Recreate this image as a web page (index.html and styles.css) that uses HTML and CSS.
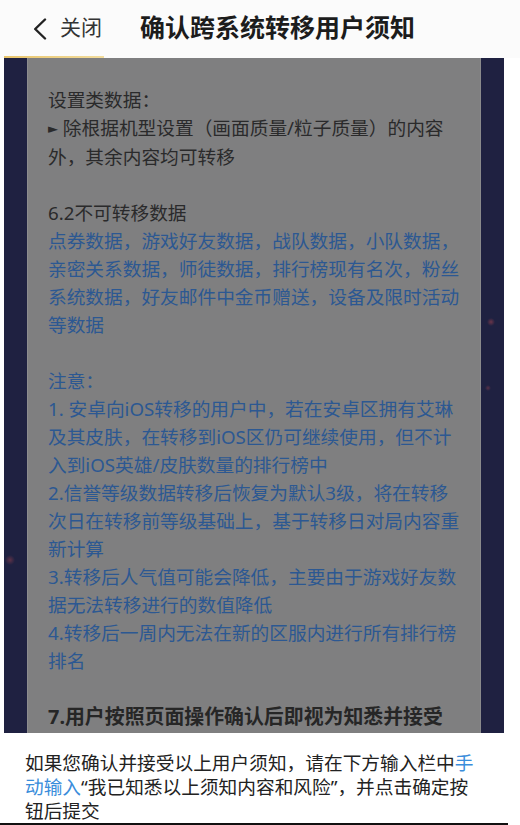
FILE: index.html
```html
<!DOCTYPE html>
<html lang="zh-CN">
<head>
<meta charset="utf-8">
<title>确认跨系统转移用户须知</title>
<link rel="stylesheet" href="styles.css">
</head>
<body>
<div class="page">
  <header class="topbar">
    <div class="back">
      <svg class="chev" width="14" height="22" viewBox="0 0 14 22"><polyline points="12,1.5 2.2,11 12,20.5" fill="none" stroke="#222" stroke-width="2.4" stroke-linecap="round" stroke-linejoin="round"/></svg>
      <span class="close">关闭</span>
    </div>
    <h1 class="title">确认跨系统转移用户须知</h1>
    <div class="progress"></div>
  </header>
  <main class="stage">
    <div class="panel">
      <p class="block dark">设置类数据：<br><span class="tri">►</span> 除根据机型设置（画面质量/粒子质量）的内容<br>外，其余内容均可转移</p>
      <p class="block"><span class="dark">6.2不可转移数据</span><br><span class="blue">点券数据，游戏好友数据，战队数据，小队数据，<br>亲密关系数据，师徒数据，排行榜现有名次，粉丝<br>系统数据，好友邮件中金币赠送，设备及限时活动<br>等数据</span></p>
      <p class="block blue">注意：<br>1. 安卓向iOS转移的用户中，若在安卓区拥有艾琳<br>及其皮肤，在转移到iOS区仍可继续使用，但不计<br>入到iOS英雄/皮肤数量的排行榜中<br>2.信誉等级数据转移后恢复为默认3级，将在转移<br>次日在转移前等级基础上，基于转移日对局内容重<br>新计算<br>3.转移后人气值可能会降低，主要由于游戏好友数<br>据无法转移进行的数值降低<br>4.转移后一周内无法在新的区服内进行所有排行榜<br>排名</p>
      <p class="block strong">7.用户按照页面操作确认后即视为知悉并接受</p>
    </div>
  </main>
  <footer class="confirm">
    <p class="confirm-text">如果您确认并接受以上用户须知，请在下方输入栏中<span class="link">手<br>动输入</span>“我已知悉以上须知内容和风险”，并点击确定按<br>钮后提交</p>
  </footer>
  <div class="edge"></div>
</div>
</body>
</html>
```

FILE: styles.css
```css
html, body {
  margin: 0;
  padding: 0;
  background: #ffffff;
}
body {
  width: 520px;
  height: 825px;
  overflow: hidden;
  font-family: "Noto Sans", "Noto Sans CJK SC", "DejaVu Sans", sans-serif;
}
.page {
  width: 520px;
  height: 825px;
  display: flex;
  flex-direction: column;
  overflow: hidden;
}
.topbar {
  height: 58px;
  flex: none;
  background: #fbfbfb;
  display: flex;
  align-items: center;
  padding: 0 0 3px 33px;
  box-sizing: border-box;
  position: relative;
}
.back {
  display: flex;
  align-items: center;
  gap: 13px;
}
.chev {
  display: block;
  margin-top: 2px;
}
.close {
  font-size: 21px;
  color: #333333;
  line-height: 1;
}
.title {
  margin: 0 0 0 38px;
  font-size: 25px;
  font-weight: 600;
  color: #1c1c1c;
  line-height: 1;
}
.progress {
  position: absolute;
  left: 4px;
  bottom: 0;
  width: 100px;
  height: 2px;
  background: linear-gradient(90deg, #e9c56c, #f2dc9c);
}
.stage {
  flex: none;
  width: 500px;
  height: 675px;
  margin-left: 4px;
  box-sizing: border-box;
  padding: 0 23px;
  background-color: #1f2141;
  background-image:
    radial-gradient(circle at 487px 264px, rgba(170, 70, 80, 0.55) 0, rgba(170, 70, 80, 0) 4px),
    radial-gradient(circle at 484px 330px, rgba(170, 70, 80, 0.4) 0, rgba(170, 70, 80, 0) 3px),
    radial-gradient(circle at 6px 502px, rgba(170, 70, 80, 0.45) 0, rgba(170, 70, 80, 0) 5px);
  display: flex;
}
.panel {
  flex: 1;
  background: #7f7f80;
  border-left: 1px solid #8c8c8e;
  border-right: 1px solid #8a8a8c;
  box-sizing: border-box;
  padding: 28px 0 0 20px;
  overflow: hidden;
  font-size: 18.7px;
  line-height: 28px;
  white-space: nowrap;
}
.block {
  margin: 0 0 28px 0;
}
.dark {
  color: #2a2a2b;
}
.blue {
  color: #2c5892;
}
.tri {
  font-family: "DejaVu Sans", sans-serif;
  font-size: 13px;
  vertical-align: 2px;
}
.strong {
  color: #262626;
  font-weight: 700;
  font-size: 19.9px;
}
.confirm {
  flex: 1;
  background: #ffffff;
  padding: 18px 0 0 25px;
}
.confirm-text {
  margin: 0;
  font-size: 18.7px;
  line-height: 24px;
  color: #222222;
  white-space: nowrap;
}
.link {
  color: #3a8ddb;
}
.edge {
  flex: none;
  width: 508px;
  height: 2px;
  background: #111111;
}
```
